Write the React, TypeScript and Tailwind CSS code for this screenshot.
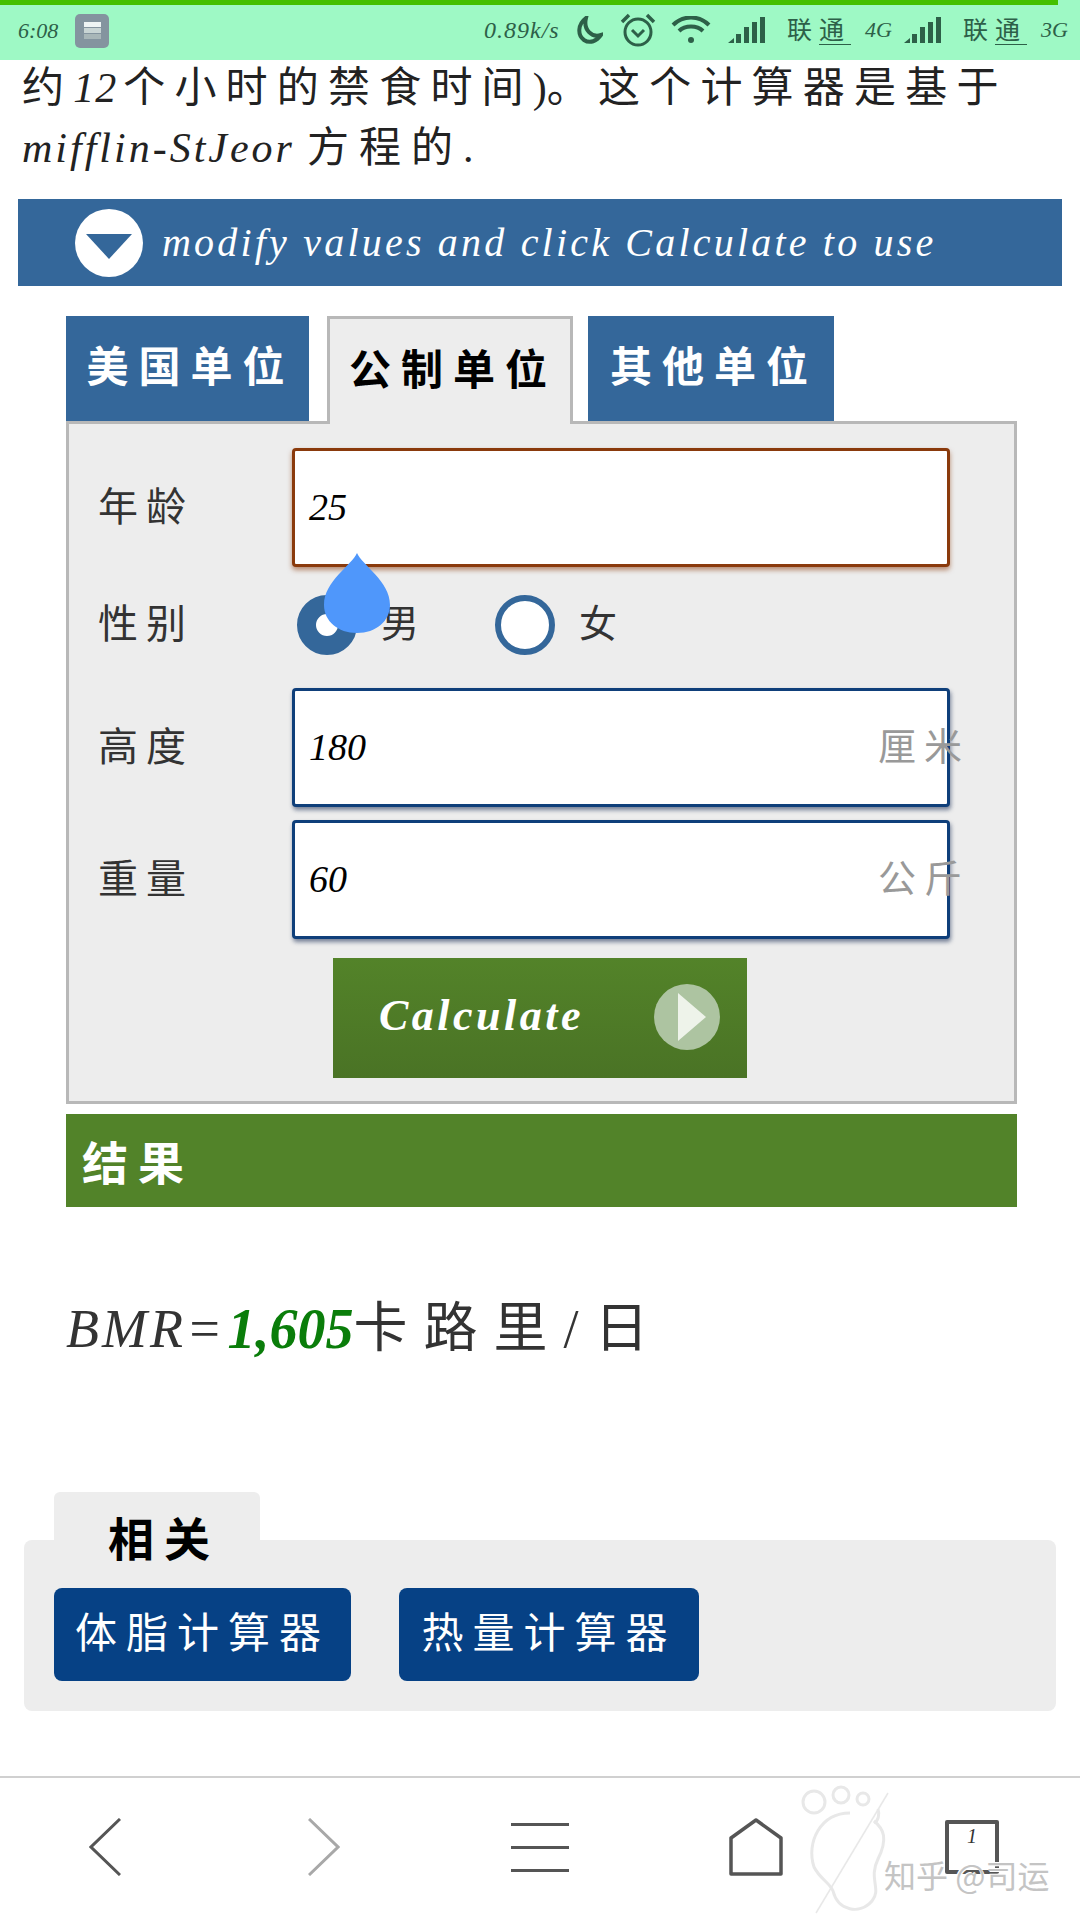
import React from 'react';

const hand = "font-['Liberation_Serif','Noto_Sans_CJK_SC',serif]";
const latin = "font-['Liberation_Serif','Noto_Sans_CJK_SC',serif] italic";
const cjk = "font-['Noto_Sans_CJK_SC','Liberation_Sans',sans-serif]";

const Signal = () => (
  <svg width="38" height="26" viewBox="0 0 38 26" fill="#2d6048">
    <path d="M0 26 L6 21 V26 Z" />
    <rect x="8" y="17" width="5" height="9" />
    <rect x="16" y="10" width="5" height="16" />
    <rect x="24" y="5" width="5" height="21" />
    <rect x="32" y="0" width="5" height="26" />
  </svg>
);

const Carrier = ({ net }: { net: string }) => (
  <div className="flex items-center text-[#2d6048]">
    <span className={`${hand} text-[25px] tracking-[7px] leading-none ml-[21px]`}>
      联<span className="border-b border-[#2d6048]">通</span>
    </span>
    <span className={`${latin} text-[22px] leading-none ml-[14px] w-[24px]`}>{net}</span>
  </div>
);

const StatusBar = () => (
  <div className="relative h-[60px] bg-[#9ef9c5] flex items-center text-[#2d6048]">
    <div className="absolute top-0 left-0 w-[1058px] h-[5px] bg-[#44c000]" />
    <span className={`${latin} text-[22px] ml-[18px] w-[57px]`}>6:08</span>
    <div className="w-[34px] h-[34px] rounded-[5px] bg-[#84949f] flex flex-col items-center justify-center gap-[1px] mt-[1px]">
      <div className="w-[17px] h-[5px] bg-[#eef4f4]" />
      <div className="w-[17px] h-[5px] bg-[#c8d4d4]" />
      <div className="w-[17px] h-[5px] bg-[#a8b6b8]" />
    </div>
    <span className={`${latin} text-[24px] tracking-[1px] ml-[375px] w-[91px] whitespace-nowrap`}>0.89k/s</span>
    <svg width="28" height="28" viewBox="0 0 28 28" fill="none" stroke="#2d6048" strokeWidth="4">
      <path d="M11 2 C3 8 2 19 9 24 C15 28 22 25 26 19 C17 22 8 14 11 2 Z" />
    </svg>
    <svg width="36" height="34" viewBox="0 0 36 34" fill="none" stroke="#2d6048" strokeWidth="3" className="ml-[17px]">
      <circle cx="18" cy="19" r="13" />
      <path d="M12 17 L18 23 L24 17" />
      <path d="M2 9 L9 2 M34 9 L27 2" strokeWidth="3.5" />
    </svg>
    <svg width="40" height="28" viewBox="0 0 40 28" fill="none" stroke="#2d6048" strokeWidth="4" className="ml-[15px]">
      <path d="M2 9 C12 -1 28 -1 38 9" />
      <path d="M8 15 C14 9 26 9 32 15" />
      <circle cx="20" cy="24" r="3" fill="#2d6048" stroke="none" />
    </svg>
    <div className="ml-[17px]"><Signal /></div>
    <Carrier net="4G" />
    <div className="ml-[15px]"><Signal /></div>
    <Carrier net="3G" />
  </div>
);

const Field = ({ label, value, unit, warn }: { label: string; value: string; unit?: string; warn?: boolean }) => (
  <div className="flex items-center">
    <span className={`${hand} w-[223px] pl-[29px] text-[40px] tracking-[8px] text-[#333]`}>{label}</span>
    <div
      className={`relative w-[658px] h-[119px] bg-white rounded-[4px] border-[3px] flex items-center pl-[14px] ${
        warn ? 'border-[#8a3a0c] shadow-[0_3px_5px_rgba(138,58,12,0.55)]' : 'border-[#0f3f7a] shadow-[1px_3px_4px_rgba(20,40,80,0.55)]'
      }`}
    >
      <span className={`${latin} text-[38px] text-black`}>{value}</span>
      {unit && (
        <span className={`${hand} absolute right-[-23px] text-[38px] tracking-[8px] text-[#999] whitespace-nowrap`}>{unit}</span>
      )}
    </div>
  </div>
);

const Radio = ({ label, checked }: { label: string; checked?: boolean }) => (
  <div className="flex items-center">
    <div className={`w-[60px] h-[60px] rounded-full bg-white border-[#34679a] ${checked ? 'border-[19px]' : 'border-[6px]'}`} />
    <span className={`${hand} text-[38px] text-[#333] ml-[24px]`}>{label}</span>
  </div>
);

const Tab = ({ label, active, className }: { label: string; active?: boolean; className: string }) => (
  <div
    className={`${className} flex items-center justify-center ${cjk} font-bold text-[42px] tracking-[10px] pl-[6px] ${
      active
        ? 'relative z-10 h-[108px] -mb-[3px] pb-[10px] bg-[#ededed] text-black border-[3px] border-b-0 border-[#b8b8b8]'
        : 'h-[105px] pb-[10px] bg-[#34679a] text-white'
    }`}
  >
    {label}
  </div>
);

const Footprint = () => (
  <svg className="absolute left-[800px] top-[1783px]" width="100" height="132" viewBox="0 0 100 132" fill="none" stroke="#e8e8e8" strokeWidth="3">
    <circle cx="14" cy="19" r="11" />
    <circle cx="41" cy="12" r="8" />
    <circle cx="63" cy="16" r="6" />
    <path d="M78 26 C80 32 78 38 74 40" />
    <path d="M50 30 C20 30 6 60 14 84 C20 96 30 100 33 108 C38 128 60 132 72 118 C82 106 68 96 78 76 C88 56 84 46 74 38" />
    <path d="M88 10 L16 130" strokeWidth="1.5" />
  </svg>
);

export default function App() {
  return (
    <div className="relative w-[1080px] h-[1920px] overflow-hidden bg-white">
      <StatusBar />

      <div className={`${hand} h-[139px] px-[22px] text-[42px] tracking-[10px] leading-[60px] text-[#222] whitespace-nowrap -mt-[2px]`}>
        <div className="tracking-[9.2px]">约<span className={`${latin} tracking-[1px] mr-[6px]`}>12</span>个小时的禁食时间<span className="tracking-normal">)</span>。这个计算器是基于</div>
        <div><span className={`${latin} tracking-[3px] mr-[12px]`}>mifflin-StJeor</span>方程的.</div>
      </div>

      {/* banner */}
      <div className="mx-[18px] mt-[2px] h-[87px] bg-[#34679a] flex items-center pl-[57px]">
        <div className="w-[68px] h-[68px] rounded-full bg-white flex items-center justify-center">
          <svg width="46" height="25" viewBox="0 0 46 25" className="mt-[8px]">
            <path d="M0 0 H46 L23 25 Z" fill="#34679a" />
          </svg>
        </div>
        <span className={`${latin} ml-[19px] text-white text-[40px] tracking-[3.2px] whitespace-nowrap`}>modify values and click Calculate to use</span>
      </div>

      {/* tabs */}
      <div className="ml-[66px] mt-[30px] flex items-end h-[105px]">
        <Tab label="美国单位" className="w-[243px]" />
        <Tab label="公制单位" active className="w-[246px] ml-[18px]" />
        <Tab label="其他单位" className="w-[246px] ml-[15px]" />
      </div>

      {/* form */}
      <div className="ml-[66px] w-[951px] h-[683px] bg-[#ededed] border-[3px] border-[#b8b8b8] pt-[24px]">
        <Field label="年龄" value="25" warn />
        <div className="flex items-center h-[121px] pb-[6px]">
          <span className={`${hand} w-[223px] pl-[29px] text-[40px] tracking-[8px] text-[#333]`}>性别</span>
          <div className="ml-[5px] flex gap-[76px]">
            <Radio label="男" checked />
            <Radio label="女" />
          </div>
        </div>
        <Field label="高度" value="180" unit="厘米" />
        <div className="h-[13px]" />
        <Field label="重量" value="60" unit="公斤" />
        <div className="ml-[264px] mt-[19px] w-[414px] h-[120px] bg-gradient-to-b from-[#538329] to-[#4a7325] flex items-center pl-[46px]">
          <span className={`${latin} font-bold text-white text-[44px] tracking-[3.5px] w-[275px] pb-[4px]`}>Calculate</span>
          <div className="w-[66px] h-[66px] rounded-full bg-[#adc4a1] flex items-center justify-center -mt-[2px]">
            <svg width="28" height="48" viewBox="0 0 28 48" className="ml-[10px]">
              <path d="M0 0 L28 24 L0 48 Z" fill="#eef3ea" />
            </svg>
          </div>
        </div>
      </div>

      {/* result */}
      <div className="ml-[66px] mt-[10px] w-[951px] h-[93px] bg-[#528329] flex items-center pl-[16px]">
        <span className={`${cjk} font-bold text-white text-[46px] tracking-[10px]`}>结果</span>
      </div>

      <div className={`${hand} ml-[66px] mt-[84px] h-[76px] flex items-center text-[#333] whitespace-nowrap`}>
        <span className={`${latin} text-[54px] tracking-[3px]`}>BMR=</span>
        <span className={`${latin} text-[56px] font-bold text-[#0a7d0a] ml-[2px] w-[126px]`}>1,605</span>
        <span className="text-[54px] tracking-[16px]">卡路里/日</span>
      </div>

      {/* related */}
      <div className="relative mt-[125px]">
        <div className="ml-[54px] w-[206px] h-[48px] bg-[#ededed] rounded-t-[6px]" />
        <div className="mx-[24px] h-[171px] bg-[#ededed] rounded-[8px] pl-[30px] pt-[48px] flex gap-[48px]">
          <div className={`${hand} h-[93px] w-[297px] rounded-[8px] bg-[#064185] text-white text-[42px] tracking-[9px] flex items-center justify-center`}>体脂计算器</div>
          <div className={`${hand} h-[93px] w-[300px] rounded-[8px] bg-[#064185] text-white text-[42px] tracking-[9px] flex items-center justify-center`}>热量计算器</div>
        </div>
        <span className={`${cjk} font-bold absolute left-[108px] top-[14px] text-[46px] tracking-[10px] text-black leading-[60px]`}>相关</span>
      </div>

      {/* bottom nav */}
      <div className="mt-[65px] h-[144px] border-t-[2px] border-[#d0d0d0] grid grid-cols-5 items-center pb-[4px]">
        <div className="flex justify-center -ml-[6px]">
          <svg width="32" height="58" viewBox="0 0 32 58" fill="none" stroke="#555" strokeWidth="3"><path d="M31 1 L2 29 L31 57" /></svg>
        </div>
        <div className="flex justify-center">
          <svg width="32" height="58" viewBox="0 0 32 58" fill="none" stroke="#a8a8a8" strokeWidth="3"><path d="M1 1 L30 29 L1 57" /></svg>
        </div>
        <div className="flex flex-col items-center gap-[20px]">
          <div className="w-[58px] h-[3px] bg-[#555]" />
          <div className="w-[58px] h-[3px] bg-[#555]" />
          <div className="w-[58px] h-[3px] bg-[#555]" />
        </div>
        <div className="flex justify-center">
          <svg width="54" height="58" viewBox="0 0 54 58" fill="none" stroke="#555" strokeWidth="3.5" strokeLinejoin="round"><path d="M2 20 L27 2 L52 20 V56 H2 Z" /></svg>
        </div>
        <div className="flex justify-center">
          <div className={`${latin} w-[54px] h-[54px] rounded-[2px] border-[4px] border-[#555] flex items-start justify-center text-[20px] leading-[24px] text-[#333]`}>1</div>
        </div>
      </div>

      {/* water drop handle */}
      <svg className="absolute left-[324px] top-[553px]" width="66" height="80" viewBox="0 0 66 80">
        <path d="M33 0 C38 12 66 28 66 52 C66 68 52 80 33 80 C14 80 0 68 0 52 C0 28 28 12 33 0 Z" fill="#4f97fb" />
      </svg>

      {/* watermark */}
      <Footprint />
      <span className={`${cjk} absolute left-[884px] top-[1852px] text-[32px] leading-[44px] text-[#c4c4c4] whitespace-nowrap [text-shadow:1px_1px_0_#fff,-1px_-1px_0_#fff]`}>知乎 @司运</span>
    </div>
  );
}
